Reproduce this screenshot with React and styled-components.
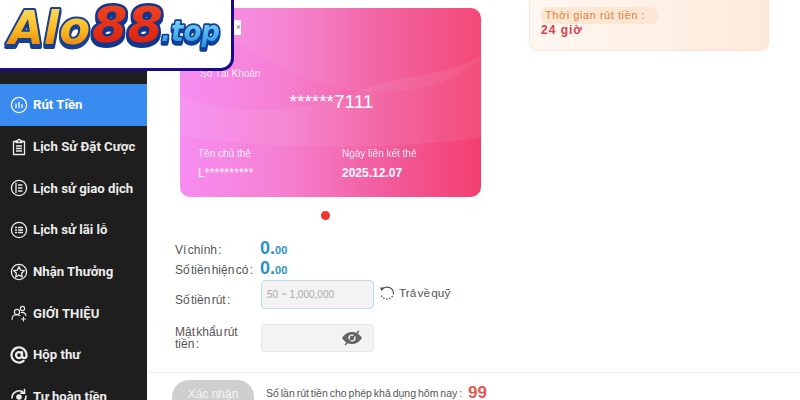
import React from "react"
import styled, { createGlobalStyle } from "styled-components"
import { AtSign } from "lucide-react"

const GlobalStyle = createGlobalStyle`
  html, body {
    margin: 0;
    height: 400px;
    overflow: hidden;
    background: #fff;
    font-family: "Liberation Sans", Arial, sans-serif;
  }
`

const Page = styled.div`
  position: relative;
  display: flex;
  width: 800px;
  height: 400px;
  overflow: hidden;
`

const LogoBox = styled.div`
  position: absolute;
  top: 0;
  left: 0;
  z-index: 5;
  width: 231px;
  height: 68px;
  background: #fff;
  border-right: 3px solid #1c0a8a;
  border-bottom: 3px solid #1c0a8a;
  border-bottom-right-radius: 13px;

  svg {
    display: block;
  }
`

const LogoText = styled.text`
  paint-order: stroke;
  stroke-linejoin: round;
  filter: drop-shadow(0 3px 0 ${p => p.$edge});
`

const Sidebar = styled.nav`
  flex: 0 0 147px;
  height: 400px;
  padding-top: 84px;
  box-sizing: border-box;
  background: #1e1e1e;
`

const MenuItem = styled.div`
  display: flex;
  align-items: center;
  gap: 5px;
  height: 41.7px;
  padding-left: 10px;
  box-sizing: border-box;
  background: ${p => (p.$active ? "#3a8bef" : "transparent")};
  color: ${p => (p.$active ? "#fff" : "#ececec")};
  font-family: Roboto, sans-serif;
  font-size: 13.2px;
  font-weight: 700;
  white-space: nowrap;

  svg {
    flex: 0 0 18px;
    width: 18px;
    height: 18px;
  }
`

const Main = styled.main`
  flex: 1;
  display: flex;
  flex-direction: column;
  height: 400px;
  overflow: hidden;
`

const TopRow = styled.div`
  flex: 0 0 373px;
  display: flex;
  align-items: flex-start;
  border-bottom: 1px solid #f0f0f0;
  box-sizing: border-box;
`

const Left = styled.div`
  flex: 0 0 382px;
`

const Card = styled.div`
  position: relative;
  width: 301px;
  height: 189px;
  margin: 8px 0 0 33px;
  padding: 12px 18px 0;
  box-sizing: border-box;
  overflow: hidden;
  border-radius: 10px;
  color: #fff;
  background: linear-gradient(90deg, #f78df2 0%, #f57fd0 35%, #f25a9a 70%, #f33f70 100%);
`

const Swoosh = styled.svg`
  position: absolute;
  inset: 0;
  width: 100%;
  height: 100%;
`

const CardBody = styled.div`
  position: relative;
  display: flex;
  flex-direction: column;
`

const BrokenImage = styled.div`
  align-self: flex-start;
  width: 43px;
  height: 15px;
  background: #fff;
  color: #777;
  font-size: 9px;
  line-height: 15px;
  text-align: right;
`

const AccountLabel = styled.div`
  margin-top: 33px;
  margin-left: 2px;
  font-size: 10px;
  line-height: 12px;
  opacity: 0.85;
`

const AccountNumber = styled.div`
  margin-top: 10px;
  padding-left: 2px;
  text-align: center;
  font-size: 19px;
  line-height: 24px;
`

const CardFoot = styled.div`
  display: grid;
  grid-template-columns: 144px 1fr;
  margin-top: 34px;
`

const FootLabel = styled.div`
  font-size: 10px;
  line-height: 12px;
  opacity: 0.9;
`

const FootValue = styled.div`
  margin-top: 6px;
  font-size: 12px;
  line-height: 14px;
  font-weight: ${p => (p.$bold ? 700 : 400)};
  letter-spacing: ${p => (p.$bold ? "0" : "0.2px")};
`

const Dot = styled.div`
  width: 9px;
  height: 9px;
  margin: 14px 0 0 174px;
  border-radius: 50%;
  background: #ee3530;
`

const Form = styled.div`
  margin: 18px 0 0 28px;
  color: #555;
  font-size: 12px;
  word-spacing: -2px;
`

const BalanceRow = styled.div`
  display: flex;
  align-items: baseline;
  height: 20px;
  line-height: 20px;
`

const Label = styled.div`
  flex: 0 0 86px;
  margin-top: ${p => p.$drop || 0}px;
  line-height: 12px;
`

const Amount = styled.span`
  margin-left: -1px;
  color: #2b92c4;
  font-size: 18px;
  font-weight: 700;

  small {
    font-size: 11px;
  }
`

const FieldRow = styled.div`
  display: flex;
  align-items: center;
  margin-top: ${p => p.$top || 0}px;
`

const Field = styled.div`
  display: flex;
  align-items: center;
  justify-content: space-between;
  width: 113px;
  height: ${p => p.$height}px;
  padding: 0 11px 0 5px;
  box-sizing: border-box;
  background: #f3f3f3;
  border: 1px solid ${p => (p.$focus ? "#bcdcec" : "#e6e6e6")};
  border-radius: 4px;
  color: #aaa;
  font-size: 10px;
  word-spacing: 0;
`

const Back = styled.div`
  display: flex;
  align-items: center;
  gap: 4px;
  margin: -3px 0 0 5px;
  font-size: 11.8px;
`

const Side = styled.div`
  flex: 0 0 240px;
  height: 51px;
  padding: 7px 12px 0 11px;
  box-sizing: border-box;
  background: linear-gradient(90deg, #fff7f1, #fdeadc);
  border: 1px solid #fae4d6;
  border-top: 0;
  border-radius: 0 0 9px 9px;
  font-size: 11px;
`

const Pill = styled.div`
  width: 117px;
  height: 17px;
  padding-left: 4px;
  box-sizing: border-box;
  line-height: 17px;
  letter-spacing: 0.55px;
  background: #fde6d2;
  border-radius: 7px;
  color: #e0813f;
  white-space: nowrap;
`

const Hours = styled.div`
  margin-top: -1px;
  color: #d93c4b;
  font-size: 12px;
  font-weight: 700;
  letter-spacing: 1px;
  line-height: 14px;
`

const Footer = styled.div`
  display: flex;
  gap: 12px;
  padding: 7px 0 0 25px;
`

const Confirm = styled.div`
  flex: 0 0 82px;
  height: 34px;
  border-radius: 17px;
  background: #cfcfcf;
  color: #f4f4f4;
  font-size: 12px;
  line-height: 28px;
  text-align: center;
`

const Limit = styled.div`
  display: flex;
  align-items: center;
  gap: 6px;
  height: 26px;
  color: #555;
  font-size: 10.5px;
  word-spacing: -1px;

  b {
    color: #e05a55;
    font-size: 17px;
  }
`

const Round = ({ children }) => (
  <svg viewBox="0 0 18 18" fill="none" stroke="currentColor" strokeWidth="1.3" strokeLinecap="round">
    <circle cx="9" cy="9" r="7.6" />
    {children}
  </svg>
)

const Logo = () => (
  <svg width="231" height="68" viewBox="0 0 231 68">
    <defs>
      <linearGradient id="gold" x1="0" y1="0" x2="0" y2="1">
        <stop offset="0" stopColor="#ffe46a" />
        <stop offset="0.55" stopColor="#fbb71e" />
        <stop offset="1" stopColor="#d96f08" />
      </linearGradient>
      <linearGradient id="red" x1="0" y1="0" x2="0" y2="1">
        <stop offset="0" stopColor="#f44a22" />
        <stop offset="1" stopColor="#d81a0c" />
      </linearGradient>
      <linearGradient id="sky" x1="0" y1="0" x2="0" y2="1">
        <stop offset="0" stopColor="#8fe0fb" />
        <stop offset="1" stopColor="#1d8fe0" />
      </linearGradient>
    </defs>
    <g fontFamily="'DejaVu Sans', sans-serif" fontWeight="700" fontStyle="italic">
      <LogoText $edge="#173f92" x="9" y="44" fontSize="46" textLength="81" lengthAdjust="spacingAndGlyphs" fill="url(#gold)" stroke="#173f92" strokeWidth="4">Alo</LogoText>
      <LogoText $edge="#12368e" x="92" y="42" fontSize="50" textLength="71" lengthAdjust="spacingAndGlyphs" fill="url(#red)" stroke="#12368e" strokeWidth="5">88</LogoText>
      <LogoText $edge="#123f9a" x="161" y="41" fontSize="28" textLength="59" lengthAdjust="spacingAndGlyphs" fill="url(#sky)" stroke="#123f9a" strokeWidth="3.5">.top</LogoText>
    </g>
  </svg>
)

const menu = [
  {
    label: "Rút Tiền",
    active: true,
    icon: (
      <Round>
        <path d="M6 8v3.5M9 6.500v5M12 8.500v3" />
      </Round>
    ),
  },
  {
    label: "Lịch Sử Đặt Cược",
    icon: (
      <svg viewBox="0 0 18 18" fill="none" stroke="currentColor" strokeWidth="1.3" strokeLinejoin="round">
        <path d="M6 3.500H3.500v13h11v-13H12" />
        <path d="M6 4.500V3h1.500a1.500 1.500 0 0 1 3 0H12v1.500z" />
        <path d="M6 8h6M6 10.500h6M6 13h6" />
      </svg>
    ),
  },
  {
    label: "Lịch sử giao dịch",
    icon: (
      <Round>
        <path d="M6 4.500v9M8.500 6h3.500M8.500 9h3.500M8.500 12h3.500" />
      </Round>
    ),
  },
  {
    label: "Lịch sử lãi lỗ",
    icon: (
      <Round>
        <path d="M5.500 6.500h1M8.500 6.500h4M5.500 9h1M8.500 9h4M5.500 11.500h1M8.500 11.500h4" />
      </Round>
    ),
  },
  {
    label: "Nhận Thưởng",
    icon: (
      <Round>
        <path d="M9 3.600l1.600 3.500 3.800.5-2.800 2.600.7 3.800L9 12.100 5.700 14l.7-3.800-2.800-2.600 3.800-.5z" strokeLinejoin="round" />
      </Round>
    ),
  },
  {
    label: "GIỚI THIỆU",
    icon: (
      <svg viewBox="0 0 18 18" fill="none" stroke="currentColor" strokeWidth="1.100" strokeLinecap="round">
        <circle cx="7" cy="8" r="2.600" />
        <path d="M2 15.500c0-3 2-4.700 5-4.700 1.200 0 2.200.3 3 .8" />
        <circle cx="12.500" cy="4.500" r="2.100" />
        <path d="M11 8.500c2.500-.5 4.500.6 5 3M13.500 13v4M11.500 15h4" />
      </svg>
    ),
  },
  { label: "Hộp thư", icon: <AtSign strokeWidth={3} /> },
  {
    label: "Tự hoàn tiền",
    icon: (
      <svg viewBox="0 0 18 18" fill="none" stroke="currentColor" strokeWidth="1.600" strokeLinecap="round">
        <path d="M2 10a7 7 0 0 1 12-5M16 8a7 7 0 0 1-12 5" />
        <path d="M14.500 1.500v3.600h-3.600M3.500 16.500v-3.600h3.600" />
        <circle cx="9" cy="9" r="2" fill="currentColor" />
      </svg>
    ),
  },
]

export default function App() {
  return (
    <Page>
      <GlobalStyle />
      <LogoBox>
        <Logo />
      </LogoBox>
      <Sidebar>
        {menu.map(item => (
          <MenuItem key={item.label} $active={item.active}>
            {item.icon}
            <span>{item.label}</span>
          </MenuItem>
        ))}
      </Sidebar>
      <Main>
        <TopRow>
          <Left>
            <Card>
              <Swoosh viewBox="0 0 301 189" preserveAspectRatio="none">
                <path d="M0 5C60 30 110 75 170 82C220 88 270 80 301 50V0H0Z" fill="#fff" opacity="0.05" />
                <path d="M0 88C60 110 130 105 190 78C230 68 270 65 301 48V130C200 142 90 142 0 128Z" fill="#fff" opacity="0.07" />
              </Swoosh>
              <CardBody>
                <BrokenImage>×</BrokenImage>
                <AccountLabel>Số Tài Khoản</AccountLabel>
                <AccountNumber>******7111</AccountNumber>
                <CardFoot>
                  <div>
                    <FootLabel>Tên chủ thẻ</FootLabel>
                    <FootValue>L**********</FootValue>
                  </div>
                  <div>
                    <FootLabel>Ngày liên kết thẻ</FootLabel>
                    <FootValue $bold>2025.12.07</FootValue>
                  </div>
                </CardFoot>
              </CardBody>
            </Card>
            <Dot />
            <Form>
              <BalanceRow>
                <Label>Ví chính :</Label>
                <Amount>0.<small>00</small></Amount>
              </BalanceRow>
              <BalanceRow>
                <Label>Số tiền hiện có :</Label>
                <Amount>0.<small>00</small></Amount>
              </BalanceRow>
              <FieldRow $top={2}>
                <Label $drop={10}>Số tiền rút :</Label>
                <Field $focus $height={29}>50 ~ 1,000,000</Field>
                <Back>
                  <svg width="16" height="16" viewBox="0 0 16 16" fill="none" stroke="#555" strokeWidth="1.200">
                    <path d="M3 4.500A6.500 6.500 0 0 1 14.500 8" />
                    <path d="M14.500 8A6.500 6.500 0 0 1 2 10" strokeDasharray="1.500 1.500" />
                    <path d="M1 2.500l4.500 0-3 3.500z" fill="#555" stroke="none" />
                  </svg>
                  Trả về quỹ
                </Back>
              </FieldRow>
              <FieldRow $top={15}>
                <Label>Mật khẩu rút<br />tiền :</Label>
                <Field $height={28}>
                  <span />
                  <svg width="20" height="16" viewBox="0 0 20 16">
                    <path d="M0 8C3 3.500 6.500 2 10 2s7 1.500 10 6c-3 4.500-6.500 6-10 6S3 12.500 0 8z" fill="#666" />
                    <circle cx="10" cy="8" r="3.600" fill="#f3f3f3" />
                    <circle cx="10" cy="8" r="2.200" fill="#666" />
                    <path d="M3 15L17 1" stroke="#666" strokeWidth="1.600" />
                  </svg>
                </Field>
              </FieldRow>
            </Form>
          </Left>
          <Side>
            <Pill>Thời gian rút tiền :</Pill>
            <Hours>24 giờ</Hours>
          </Side>
        </TopRow>
        <Footer>
          <Confirm>Xác nhận</Confirm>
          <Limit>
            Số lần rút tiền cho phép khả dụng hôm nay :
            <b>99</b>
          </Limit>
        </Footer>
      </Main>
    </Page>
  )
}
